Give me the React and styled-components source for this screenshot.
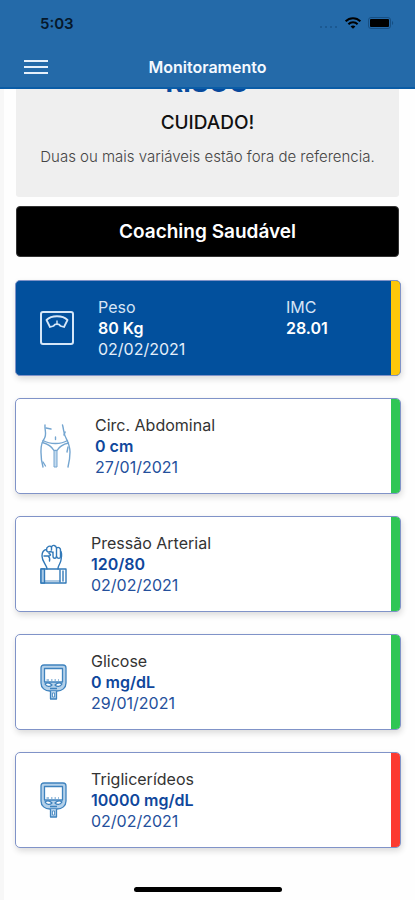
import React from "react";
import styled, { createGlobalStyle } from "styled-components";

const GlobalStyle = createGlobalStyle`
  * {
    box-sizing: border-box;
  }

  body {
    margin: 0;
    background-color: #fefefe;
    font-family: "Inter", "Liberation Sans", sans-serif;
  }
`;

const Screen = styled.div`
  display: flex;
  flex-direction: column;
  min-height: 100vh;
  box-shadow: inset 4px 0 #f7f7f7;
`;

const Header = styled.header`
  position: sticky;
  top: 0;
  z-index: 1;
  height: 89px;
  background-color: #246aa9;
  border-bottom: 2px solid #0a5ca6;
`;

const StatusBar = styled.div`
  display: flex;
  align-items: center;
  justify-content: space-between;
  height: 46px;
  padding: 0 21px 0 40px;
  color: #06182b;
`;

const Clock = styled.time`
  font-size: 15px;
  font-weight: 600;
`;

const StatusIcons = styled.div`
  display: flex;
  align-items: center;
  gap: 7px;
`;

const NavBar = styled.div`
  display: grid;
  grid-template-columns: 32px 1fr 32px;
  align-items: center;
  height: 42px;
  padding: 0 20px;
`;

const MenuButton = styled.button`
  display: flex;
  flex-direction: column;
  gap: 4px;
  width: 32px;
  padding: 4px;
  border: none;
  background: none;
  cursor: pointer;
`;

const MenuLine = styled.span`
  width: 24px;
  height: 2px;
  background-color: #e6f0fb;
`;

const NavTitle = styled.h1`
  margin: 0;
  color: #f4f9ff;
  font-size: 16px;
  font-weight: 600;
  text-align: center;
`;

const Content = styled.main`
  padding: 0 16px;
`;

const RiskPanel = styled.section`
  height: 108px;
  margin-bottom: 9px;
  overflow: hidden;
  border-radius: 0 0 3px 3px;
  background-color: #efefef;
  text-align: center;
`;

const RiskTitle = styled.h2`
  margin: -22px 0 12px;
  color: #084a9c;
  font-size: 27px;
  line-height: 32px;
  font-weight: 700;
`;

const RiskLevel = styled.h3`
  margin: 0 0 12px;
  color: #111;
  font-size: 19px;
  line-height: 24px;
  font-weight: 500;
`;

const RiskText = styled.p`
  margin: 0;
  color: #444;
  font-size: 15px;
  line-height: 20px;
  font-weight: 300;
`;

const CoachingButton = styled.button`
  display: block;
  width: 100%;
  height: 51px;
  border: 1px solid #333;
  border-radius: 4px;
  background-color: black;
  color: white;
  font-family: inherit;
  font-size: 19px;
  font-weight: 600;
  cursor: pointer;
`;

const CardList = styled.ul`
  display: flex;
  flex-direction: column;
  gap: 22px;
  margin: 23px -2px 0 -1px;
  padding: 0;
  list-style: none;
`;

const Card = styled.li`
  display: flex;
  align-items: center;
  gap: 24px;
  height: 96px;
  padding-left: 24px;
  overflow: hidden;
  border: 1px solid #8093c8;
  border-radius: 5px;
  background-color: ${props => props.$active ? '#02509d' : 'white'};
  color: ${props => props.$active ? '#e4eefa' : '#24509c'};
  box-shadow: 1px 3px 6px rgba(0, 0, 0, 0.14);
`;

const Readings = styled.div`
  flex: 1;
  display: grid;
  grid-template-columns: 1fr 105px;
  font-size: 16px;
  line-height: 21px;
`;

const Label = styled.div`
  color: ${props => props.$active ? '#d6e4f5' : '#333'};
  font-weight: 400;
`;

const Value = styled.div`
  color: ${props => props.$active ? 'white' : '#0f479c'};
  font-weight: 600;
`;

const DateText = styled.time`
  display: block;
  font-weight: 400;
`;

const StatusStripe = styled.div`
  align-self: stretch;
  width: 9px;
  margin-left: -24px;
  background-color: ${props => props.$color};
`;

const HomeIndicator = styled.div`
  width: 148px;
  height: 5px;
  margin: auto auto 8px;
  border-radius: 3px;
  background-color: black;
`;

function SignalIcon() {
  return (
    <svg width="19" height="14" viewBox="0 0 19 14" fill="#18548b">
      <circle cx="2" cy="11" r="1" />
      <circle cx="7" cy="11" r="1" />
      <circle cx="12" cy="11" r="1" />
      <circle cx="17" cy="11" r="1" />
    </svg>
  );
}

function WifiIcon() {
  return (
    <svg width="16" height="12" viewBox="0 0 16 12" fill="none" stroke="#000" strokeWidth="2">
      <path d="M0.7 4.3C4.6 0.2 11.4 0.2 15.3 4.3" />
      <path d="M3.4 7.2C6 4.6 10 4.6 12.6 7.2" />
      <path d="M8 11.8L5.6 9.4C6.9 8.1 9.1 8.1 10.4 9.4Z" fill="#000" stroke="none" />
    </svg>
  );
}

function BatteryIcon() {
  return (
    <svg width="26" height="12" viewBox="0 0 26 12">
      <rect x="0.5" y="0.5" width="22" height="11" rx="2.5" fill="none" stroke="#164f84" />
      <rect x="2" y="2" width="19" height="8" rx="1" fill="#000" />
      <path d="M24 4C25.6 4.6 25.6 7.4 24 8Z" fill="#164f84" />
    </svg>
  );
}

function ScaleIcon() {
  return (
    <svg width="34" height="34" viewBox="0 0 34 34" fill="none" stroke="#d5e6f8" strokeWidth="2" strokeLinejoin="round">
      <rect x="1" y="1" width="32" height="32" rx="2" />
      <path d="M6.5 9C11.500 4 22.500 4 27.500 9L24 16L20.500 15C19 12.500 15 12.500 13.500 15L10 16Z" strokeWidth="1.8" />
      <path d="M17 13.500V9.500" strokeWidth="1.4" />
    </svg>
  );
}

function WaistIcon() {
  return (
    <svg width="31" height="44" viewBox="0 0 31 44" fill="none" stroke="#74a5d0" strokeWidth="1.4" strokeLinecap="round" strokeLinejoin="round">
      <path d="M5 1C4.600 6 6.500 9 5 13C4 16 1.500 18 1.200 23C0.600 30 1 36 3 43" />
      <path d="M22.500 1C24 6 23.500 10 26 14C28 18 30 22 30 28C30 34 29 39 28 43" />
      <path d="M6 4L11 5" />
      <path d="M25 8L24 11" />
      <path d="M15.500 13V15.500" />
      <path d="M3 16.500C10 20.500 21 20.500 27.500 16.500" />
      <path d="M2.500 18.500C8 20 12 23 14 26.500H17C19 23 24 20 28.500 19" />
      <path d="M14 27V43H17V27Z" fill="#c4dbef" strokeWidth="1" />
      <path d="M3 38L5.500 42" />
      <path d="M28 23L27 28" />
    </svg>
  );
}

function FistIcon() {
  return (
    <svg width="27" height="40" viewBox="0 0 27 40" fill="none" stroke="#3279b8" strokeWidth="1.4" strokeLinecap="round" strokeLinejoin="round">
      <path d="M7 25C7 21 2 18 2 12C2 8 3.500 6 6.500 5.500C6.500 2 10.500 1.500 11.500 3C12.500 0.500 16 1 16.500 4C18.500 2.500 21 4 20.500 7C22.500 9 21.500 13 21 16C20.500 20 18 21 18 25" />
      <path d="M16.500 4V12C16.500 15 13 15 13 12V8" />
      <path d="M20.500 7V12.500C20.500 15 17.500 15 16.500 12.500" />
      <path d="M11.500 3V6M6.500 5.500C6.500 8 8.500 8.500 11 7.500L12.500 8.500" />
      <path d="M4 12H8C11 12 11.500 10.500 9 9.500M8 12C9.500 13 10 15 9.500 17" />
      <rect x="1" y="25" width="25" height="14" />
      <path d="M1 25H4.500V39H1Z" fill="#a9cae6" />
      <path d="M20 26V38M23 27V37" />
      <path d="M5 37H20" strokeWidth="0.8" />
    </svg>
  );
}

function GlucometerIcon() {
  return (
    <svg width="27" height="36" viewBox="0 0 27 36" fill="none" stroke="#3f83be" strokeWidth="1.3" strokeLinejoin="round">
      <path d="M4 1H23C25 1 26 2 26 4V19C26 24 22 27 17 27H10C5 27 1 24 1 19V4C1 2 2 1 4 1Z" fill="#b4d1ea" />
      <path d="M4.500 4.500H22.500V18H4.500Z" fill="#fff" />
      <path d="M6.500 16H9M11 16H12.500M14.500 16H16M18 16H19" strokeWidth="1" />
      <path d="M5 20C7 18.500 10 19 12 21C10 23 7 23 5 20Z" fill="#fff" />
      <path d="M22 20C20 18.500 17 19 15 21C17 23 20 23 22 20Z" fill="#fff" />
      <path d="M10 24.500H17" />
      <path d="M10.500 27V35H16.500V27" fill="#b4d1ea" />
      <path d="M12.500 29H14.500V33H12.500Z" fill="#fff" strokeWidth="0.8" />
    </svg>
  );
}

const readings = [
  { label: "Peso", value: "80 Kg", date: "02/02/2021", icon: ScaleIcon, color: "#fdc70a", active: true, extra: { label: "IMC", value: "28.01" } },
  { label: "Circ. Abdominal", value: "0 cm", date: "27/01/2021", icon: WaistIcon, color: "#2fc655" },
  { label: "Pressão Arterial", value: "120/80", date: "02/02/2021", icon: FistIcon, color: "#2fc655" },
  { label: "Glicose", value: "0 mg/dL", date: "29/01/2021", icon: GlucometerIcon, color: "#2fc655" },
  { label: "Triglicerídeos", value: "10000 mg/dL", date: "02/02/2021", icon: GlucometerIcon, color: "#fc3a30" },
];

function ReadingCard({ label, value, date, icon: Icon, color, active, extra }) {
  return (
    <Card $active={active}>
      <Icon />
      <Readings>
        <div>
          <Label $active={active}>{label}</Label>
          <Value $active={active}>{value}</Value>
          <DateText>{date}</DateText>
        </div>
        {extra && (
          <div>
            <Label $active={active}>{extra.label}</Label>
            <Value $active={active}>{extra.value}</Value>
          </div>
        )}
      </Readings>
      <StatusStripe $color={color} />
    </Card>
  );
}

function App() {
  return (
    <>
      <GlobalStyle />
      <Screen>
        <Header>
          <StatusBar>
            <Clock>5:03</Clock>
            <StatusIcons>
              <SignalIcon />
              <WifiIcon />
              <BatteryIcon />
            </StatusIcons>
          </StatusBar>
          <NavBar>
            <MenuButton type="button" aria-label="Abrir menu">
              <MenuLine />
              <MenuLine />
              <MenuLine />
            </MenuButton>
            <NavTitle>Monitoramento</NavTitle>
          </NavBar>
        </Header>

        <Content>
          <RiskPanel>
            <RiskTitle>RISCO</RiskTitle>
            <RiskLevel>CUIDADO!</RiskLevel>
            <RiskText>Duas ou mais variáveis estão fora de referencia.</RiskText>
          </RiskPanel>
          <CoachingButton type="button">Coaching Saudável</CoachingButton>
          <CardList>
            {readings.map((reading) => (
              <ReadingCard key={reading.label} {...reading} />
            ))}
          </CardList>
        </Content>

        <HomeIndicator />
      </Screen>
    </>
  );
}

export default App;
